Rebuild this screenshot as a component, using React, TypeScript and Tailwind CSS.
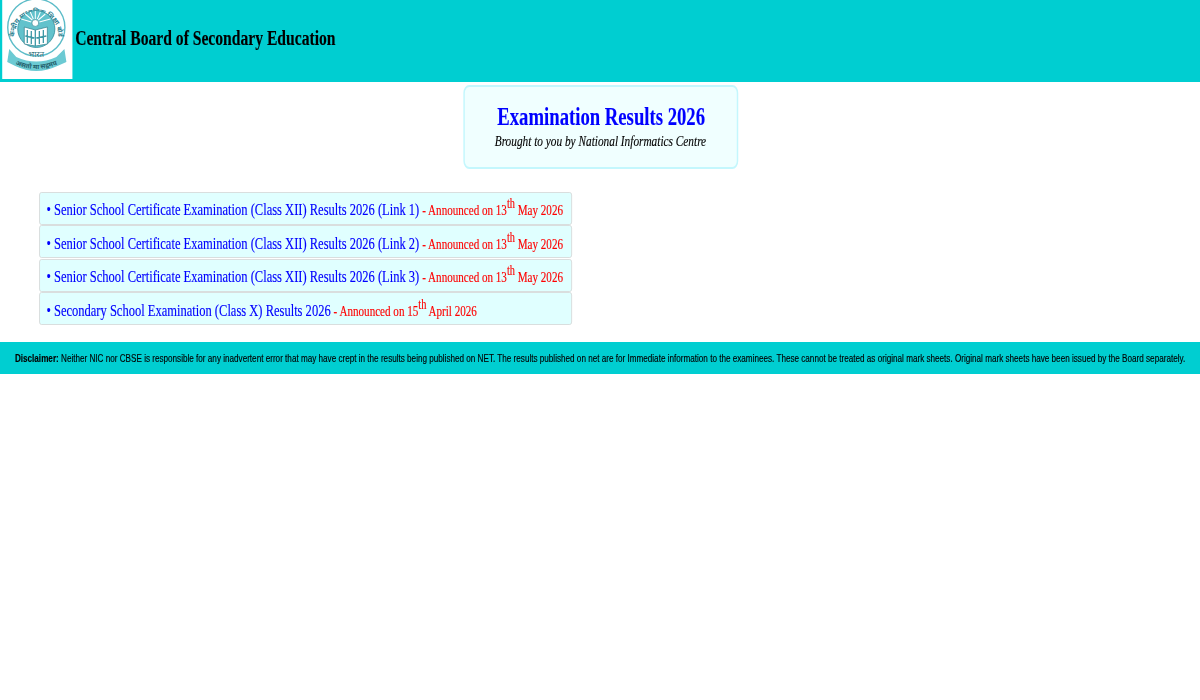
import React from "react";

function Logo() {
  return (
    <svg viewBox="0 0 70 79" preserveAspectRatio="none" className="w-full h-full">
      <defs>
        <path id="ringPath" d="M14.5 45 A21.8 21.8 0 1 1 53.5 45" />
        <path id="ribbonPath" d="M12 64 Q34 74 56 64" />
      </defs>
      <circle cx="34" cy="27.5" r="28.5" fill="#ffffff" stroke="#5cbcc8" strokeWidth="1.4" />
      <text fontSize="6.6" fontWeight="700" fill="#2a8090" fontFamily="'Noto Sans', sans-serif">
        <textPath href="#ringPath" startOffset="50%" textAnchor="middle">केन्द्रीय माध्यमिक शिक्षा बोर्ड</textPath>
      </text>
      <circle cx="34" cy="29" r="18.5" fill="#62c2cc" />
      <circle cx="34" cy="29" r="18.5" fill="none" stroke="#2f8c9a" strokeWidth="0.8" />
      <g stroke="#ffffff" strokeWidth="1">
        <path d="M29 22 L19 19 M30 20 L23 14 M31 19 L28 12 M33 19 L33 11 M35 19 L38 12 M36 20 L43 14 M37 22 L48 19" />
      </g>
      <circle cx="33" cy="23" r="3.4" fill="#ffffff" stroke="#2f7f8c" strokeWidth="0.6" />
      <path d="M22 27 L33 30 L45 27 L45 44 L33 46 L22 44 Z" fill="#ffffff" stroke="#2f7f8c" strokeWidth="0.7" />
      <path d="M33 30 V46 M25 30 V43 M29 31 V44 M37 31 V44 M41 30 V43 M23 36 L32 38 M34 38 L44 36" stroke="#3d98a5" strokeWidth="1.3" fill="none" />
      <text x="34" y="57" textAnchor="middle" fontSize="8" fill="#2f6f7c" fontFamily="'Noto Sans', sans-serif">भारत</text>
      <path d="M7 49 L14 57 Q34 66 54 57 L62 49 L64 62 L55 66 Q34 76 13 66 L5 62 Z" fill="#6ccad3" />
      <text fontSize="6.6" fontWeight="700" fill="#245f6c" fontFamily="'Noto Sans', sans-serif">
        <textPath href="#ribbonPath" startOffset="50%" textAnchor="middle">असतो मा सद्गमय</textPath>
      </text>
    </svg>
  );
}

const rows = [
  { text: "Senior School Certificate Examination (Class XII) Results 2026 (Link 1)", day: "13", rest: "May 2026" },
  { text: "Senior School Certificate Examination (Class XII) Results 2026 (Link 2)", day: "13", rest: "May 2026" },
  { text: "Senior School Certificate Examination (Class XII) Results 2026 (Link 3)", day: "13", rest: "May 2026" },
  { text: "Secondary School Examination (Class X) Results 2026", day: "15", rest: "April 2026" },
];

export default function App() {
  return (
    <div className="w-[1200px] h-[700px] overflow-hidden bg-white">
      <div className="w-[1624px] h-[700px] origin-top-left scale-x-[0.739] blur-[0.35px] [-webkit-text-stroke:0.15px] font-['Liberation_Serif',serif]">
        <header className="h-[82px] bg-[#00ced1] flex items-start">
          <div className="ml-[2.7px] w-[95px] h-[79px] bg-white shrink-0">
            <Logo />
          </div>
          <h1 className="ml-[4px] mt-[24px] text-[21.15px] leading-[28px] font-bold text-black whitespace-nowrap">
            Central Board of Secondary Education
          </h1>
        </header>

        <section className="mt-[3px] ml-[626.5px] w-[372px] h-[84px] pb-[3px] rounded-[8px] border-2 border-[#c4f7fd] bg-[#f0ffff] flex flex-col items-center justify-center">
          <div className="ml-[2px] text-[25.3px] leading-[31px] font-bold text-[#0000ff] whitespace-nowrap">Examination Results 2026</div>
          <div className="text-[15.3px] leading-[18px] italic text-black whitespace-nowrap">Brought to you by National Informatics Centre</div>
        </section>

        <ul className="mt-[22.5px] ml-[52.8px] w-[721px] flex flex-col gap-[0.5px]">
          {rows.map((r, i) => (
            <li
              key={i}
              className="h-[33px] rounded-[3px] border border-[#d6d9d9] bg-[#e0ffff] pl-[9px] pt-[4px] flex items-center leading-[24px] whitespace-nowrap"
            >
              <span className="text-[16.95px] text-[#0000ff]">• {r.text}</span>
              <span className="ml-[4px] text-[15px] text-[#ff0000]">
                - Announced on {r.day}
                <sup className="text-[14px] leading-none">th</sup> {r.rest}
              </span>
            </li>
          ))}
        </ul>

        <footer className="mt-[17px] h-[32px] bg-[#00ced1] flex items-center justify-center text-[11px] font-['Liberation_Sans',sans-serif] text-black whitespace-nowrap">
          <b>Disclaimer:</b>&nbsp;Neither NIC nor CBSE is responsible for any inadvertent error that may have crept in the results being published on NET. The results published on net are for Immediate information to the examinees. These cannot be treated as original mark sheets. Original mark sheets have been issued by the Board separately.
        </footer>
      </div>
    </div>
  );
}
